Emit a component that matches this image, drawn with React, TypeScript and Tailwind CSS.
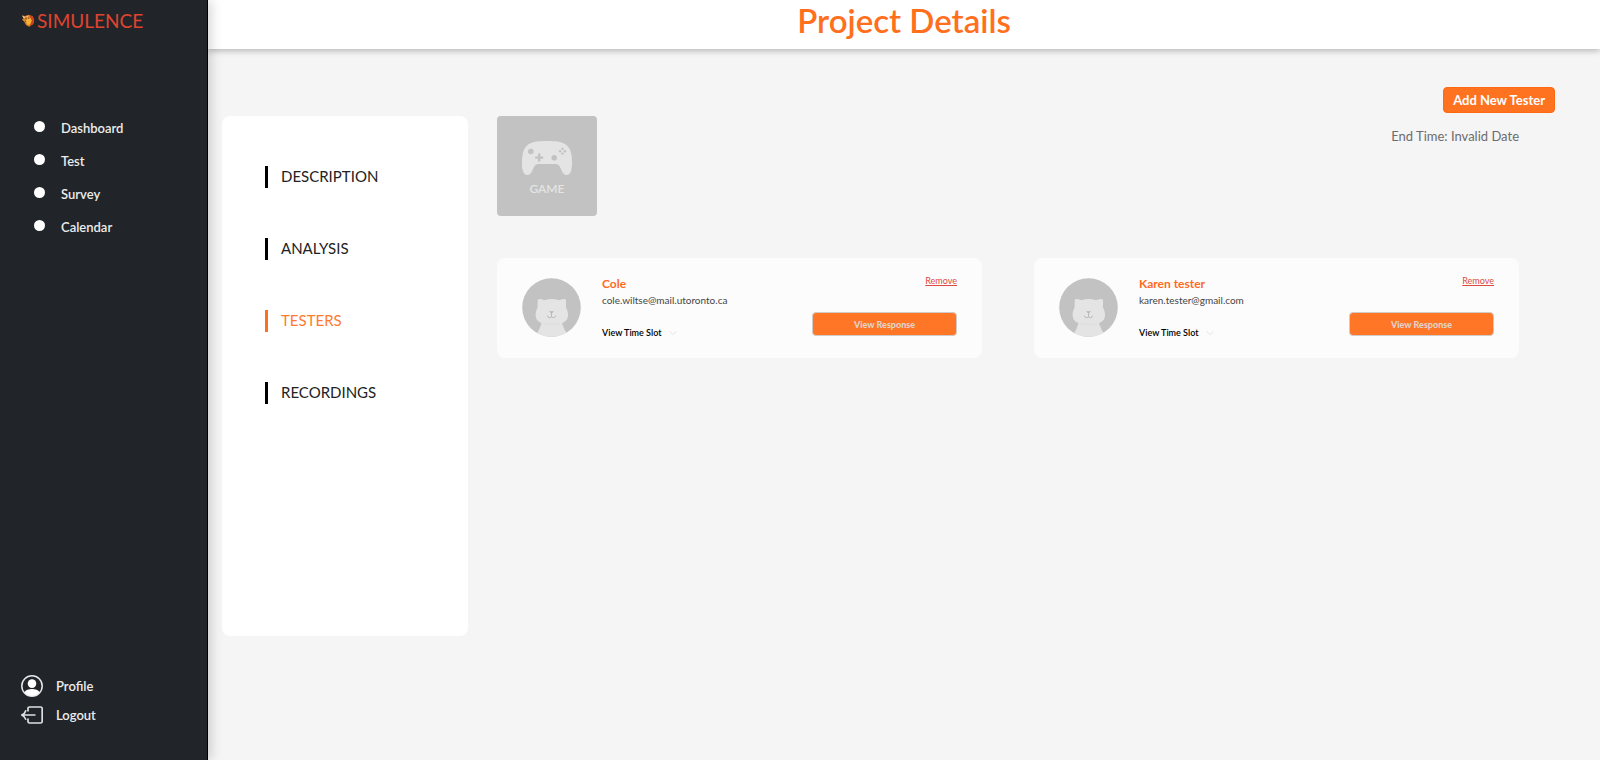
import React from "react";

type Tester = { name: string; email: string };

const navItems = ["Dashboard", "Test", "Survey", "Calendar"];
const sections = ["DESCRIPTION", "ANALYSIS", "TESTERS", "RECORDINGS"];
const testers: Tester[] = [
  { name: "Cole", email: "cole.wiltse@mail.utoronto.ca" },
  { name: "Karen tester", email: "karen.tester@gmail.com" },
];

function LionMark() {
  return (
    <svg viewBox="0 0 14 14" className="size-[14px]" aria-hidden="true">
      <path d="M1 1.5 4.5 2 7.5.8l4 1.4L13.2 6l-1 4L8 12.8 5 11 3.4 8 1 5.5 2.6 4.4Z" fill="#d9822f" />
      <path d="M8.5 1 12 2.4 13.3 6l-1.2 4L8 12.8l2.2-4.6Z" fill="#c9431f" />
      <path d="M5 5.2 9 3.6l1.8 2.8L9 10.4 7 11 5.2 8.6Z" fill="#f9b233" />
      <path d="M1 1.5 4 3.2 3 4.6ZM5 1.8l2 .2-.8 1.6Z" fill="#f3dfa6" />
      <path d="m4.4 4.2 1.4.4-.6 1.2ZM7.4 3.4l1.2.8-1.2.8ZM4 6.6l1.2.8-.4 1Z" fill="#3a2a1c" />
    </svg>
  );
}

function ProfileIcon() {
  return (
    <svg viewBox="0 0 22 22" className="size-[22px]" aria-hidden="true">
      <circle cx="11" cy="11" r="10.2" fill="none" stroke="#e6e6e6" strokeWidth="1.5" />
      <circle cx="11" cy="8.6" r="4.3" fill="#fff" />
      <path d="M3.4 17.4C4.6 15 7.6 14 11 14s6.4 1 7.6 3.4A10 10 0 0 1 11 21a10 10 0 0 1-7.6-3.6Z" fill="#fff" />
    </svg>
  );
}

function LogoutIcon() {
  return (
    <svg viewBox="0 0 22 18" className="h-[18px] w-[22px]" fill="none" stroke="#e0e0e0" strokeWidth="1.7" aria-hidden="true">
      <path d="M7 5.6V2.6Q7 1 8.6 1h11Q21.2 1 21.2 2.6v12.8q0 1.6-1.6 1.6h-11Q7 17 7 15.4v-3" />
      <path d="M14.5 9H1M5 4.2Q4 7.5.8 9 4 10.5 5 13.8" />
    </svg>
  );
}

function GameCover() {
  return (
    <svg viewBox="0 0 100 100" className="size-[100px] shrink-0" role="img" aria-label="Game cover">
      <rect width="100" height="100" rx="4" fill="#c2c2c2" />
      <path
        d="M40 25.5C45 24.8 55 24.8 60 25.5C69 26.5 73 31 74.3 38C75.5 45 75.3 52 73.7 56C72.5 59.4 68 60 66 57C64 54 63.5 50.5 61.5 49C60 47.8 58.5 48 56 48H44C41.5 48 40 47.8 38.5 49C36.5 50.5 36 54 34 57C32 60 27.5 59.4 26.3 56C24.7 52 24.5 45 25.7 38C27 31 31 26.5 40 25.5Z"
        fill="#e4e4e4"
      />
      <g fill="#c2c2c2">
        <circle cx="33.8" cy="35.5" r="2.8" />
        <circle cx="57.2" cy="41.7" r="2.8" />
        <path d="M41 37.6h2.4v2.8h2.8v2.4h-2.8v2.8H41v-2.8h-2.8v-2.4H41Z" />
        <circle cx="65.5" cy="32.8" r="1.2" />
        <circle cx="65.5" cy="37.6" r="1.2" />
        <circle cx="63.1" cy="35.2" r="1.2" />
        <circle cx="67.9" cy="35.2" r="1.2" />
      </g>
      <text x="50" y="76.5" textAnchor="middle" fontSize="12" fill="#e4e4e4" className="font-semibold">GAME</text>
    </svg>
  );
}

function CatAvatar({ id }: { id: string }) {
  return (
    <svg viewBox="0 0 59 59" className="size-[59px] shrink-0" aria-hidden="true">
      <clipPath id={id}><circle cx="29.5" cy="29.5" r="29.3" /></clipPath>
      <g clipPath={`url(#${id})`}>
        <rect width="59" height="59" fill="#c2c2c2" />
        <path d="M20.5 43Q17.5 52 13 59h34Q42 52 39 43Z" fill="#e4e4e4" />
        <path
          d="M15.7 22.5Q15.8 20.6 18 21Q20.5 21.3 22.5 22.3Q29.5 19.9 37 22.3Q39 21.3 41.5 21Q44 20.6 44 22.5V29.5C46 33 46.7 37 45.6 40C44 44 40 45.6 36 45.6H23.5C19.5 45.6 15.5 44 14.1 40C13 37 13.7 33 15.6 29.5Z"
          fill="#e4e4e4"
        />
        <path d="M21.3 45.8q8.2 1.4 16.5 0" stroke="#dadada" strokeWidth=".8" fill="none" />
        <path d="M27.5 33.5h4l-2 2Z" fill="#b9b9b9" stroke="#b9b9b9" strokeWidth=".6" />
        <path d="M29.5 35v4M25.3 37.7q.4 2 2.3 2 1.9 0 1.9-1.3 0 1.3 1.9 1.3 1.9 0 2.3-2" fill="none" stroke="#b9b9b9" />
      </g>
    </svg>
  );
}

function TesterCard({ tester, id }: { tester: Tester; id: string }) {
  return (
    <article className="flex items-start rounded-lg bg-[#fcfcfc] px-[25px] pt-5 pb-[19px]">
      <CatAvatar id={id} />
      <div className="ml-[21px] min-w-0 flex-1">
        <h2 className="text-[12px] leading-3 font-bold text-[#ff6a1f]">{tester.name}</h2>
        <p className="mt-1 text-[10px] leading-3 text-[#444]">{tester.email}</p>
        <button type="button" className="mt-5 flex items-center gap-2 pt-px text-[9px] leading-3 font-semibold text-black">
          View Time Slot
          <svg viewBox="0 0 8 4" className="h-1 w-2" fill="none" stroke="#dedede" strokeWidth=".8" aria-hidden="true">
            <path d="m.5.5 3.5 3 3.5-3" />
          </svg>
        </button>
      </div>
      <div className="flex w-1/3 flex-col items-end">
        <a href="#remove" className="-mt-[3px] text-[9px] leading-3 text-[#dc4a41] underline underline-offset-1">Remove</a>
        <button type="button" className="mt-[25px] h-6 w-full rounded-[4px] border border-[#d0cbc8] bg-[#ff7626] pt-0.5 text-[9px] leading-3 font-black text-[#e2d2c8]">
          View Response
        </button>
      </div>
    </article>
  );
}

export default function App() {
  return (
    <div className="flex min-h-screen bg-[#f5f5f5] font-['Lato',sans-serif]">
      <aside className="z-10 flex w-52 shrink-0 flex-col border-r border-black bg-[#212529] text-[#ececec] shadow-[2px_0_12px_rgba(0,0,0,0.2)]">
        <a href="#home" className="mt-3 ml-[21px] flex items-center gap-0.5 text-[19px] leading-[18px] text-[#e0432f]">
          <LionMark />
          SIMULENCE
        </a>
        <nav className="mt-[87px] flex flex-col gap-3 pl-[34px]">
          {navItems.map((item) => (
            <a key={item} href={`#${item.toLowerCase()}`} className="flex items-start gap-4 text-[13px] leading-5 font-semibold">
              <span className="mt-1 size-[11px] rounded-full bg-white" />
              <span className="pt-px">{item}</span>
            </a>
          ))}
        </nav>
        <div className="mt-auto mb-[35px] flex flex-col gap-2 pl-[21px] text-[13px] leading-5 font-semibold">
          <a href="#profile" className="flex h-[21px] items-center gap-[13px]"><ProfileIcon />Profile</a>
          <a href="#logout" className="flex h-[21px] items-center gap-[13px]"><LogoutIcon />Logout</a>
        </div>
      </aside>

      <div className="flex min-w-0 flex-1 flex-col">
        <header className="h-[49px] bg-white text-center shadow-[0_2px_6px_rgba(0,0,0,0.25)]">
          <h1 className="text-[33px] leading-10 font-semibold text-[#ff6f1c]">Project Details</h1>
        </header>
        <div className="flex items-start pt-[67px] pr-[45px] pl-[14px]">
          <nav className="flex h-[520px] w-[246px] shrink-0 flex-col gap-[50px] rounded-lg bg-white pt-[50px] pl-[43px]">
            {sections.map((section) => (
              <a
                key={section}
                href={`#${section.toLowerCase()}`}
                className={
                  section === "TESTERS"
                    ? "flex items-start gap-[13px] text-[15px] leading-5 text-[#ff7a30]"
                    : "flex items-start gap-[13px] text-[15px] leading-5 text-[#222]"
                }
              >
                <span className={section === "TESTERS" ? "h-[22px] w-[3px] bg-[#ff6f1c]" : "h-[22px] w-[3px] bg-black"} />
                {section}
              </a>
            ))}
          </nav>
          <main className="ml-[29px] min-w-0 flex-1">
            <div className="flex items-start justify-between">
              <GameCover />
              <div className="-mt-[29px] flex flex-col items-end">
                <button type="button" className="h-[26px] rounded-[4px] border border-[#ff6a10] bg-[#ff7220] px-[9px] text-[13px] leading-4 font-bold text-white">
                  Add New Tester
                </button>
                <p className="mt-[13px] mr-9 text-[13px] leading-5 text-[#6c6c6c]">End Time: Invalid Date</p>
              </div>
            </div>
            <div className="mt-[42px] mr-9 grid grid-cols-2 gap-[52px]">
              {testers.map((tester, index) => (
                <TesterCard key={tester.email} tester={tester} id={`avatar-${index}`} />
              ))}
            </div>
          </main>
        </div>
      </div>
    </div>
  );
}
